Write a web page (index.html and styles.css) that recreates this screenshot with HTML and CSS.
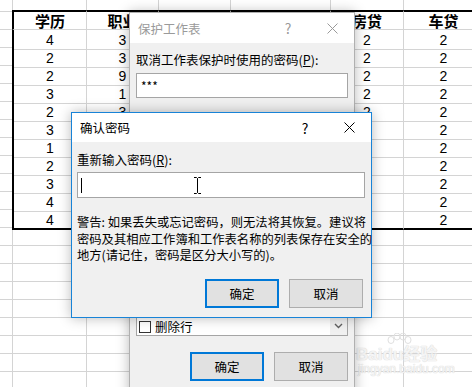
FILE: index.html
```html
<!DOCTYPE html>
<html lang="zh-CN">
<head>
  <meta charset="UTF-8">
  <title>确认密码</title>
  <link rel="stylesheet" href="styles.css">
</head>
<body>
  <div class="sheet">
    <div class="table">
      <div class="row head">
        <div class="cell">学历</div><div class="cell">职业</div><div class="cell"></div><div class="cell"></div><div class="cell">房贷</div><div class="cell">车贷</div>
      </div>
      <div class="row"><div class="cell">4</div><div class="cell">3</div><div class="cell"></div><div class="cell"></div><div class="cell">2</div><div class="cell">2</div></div>
      <div class="row"><div class="cell">2</div><div class="cell">3</div><div class="cell"></div><div class="cell"></div><div class="cell">2</div><div class="cell">2</div></div>
      <div class="row"><div class="cell">2</div><div class="cell">9</div><div class="cell"></div><div class="cell"></div><div class="cell">2</div><div class="cell">2</div></div>
      <div class="row"><div class="cell">3</div><div class="cell">1</div><div class="cell"></div><div class="cell"></div><div class="cell">2</div><div class="cell">2</div></div>
      <div class="row"><div class="cell">2</div><div class="cell">3</div><div class="cell"></div><div class="cell"></div><div class="cell">2</div><div class="cell">2</div></div>
      <div class="row"><div class="cell">3</div><div class="cell"></div><div class="cell"></div><div class="cell"></div><div class="cell"></div><div class="cell">2</div></div>
      <div class="row"><div class="cell">1</div><div class="cell"></div><div class="cell"></div><div class="cell"></div><div class="cell"></div><div class="cell">2</div></div>
      <div class="row"><div class="cell">2</div><div class="cell"></div><div class="cell"></div><div class="cell"></div><div class="cell"></div><div class="cell">2</div></div>
      <div class="row"><div class="cell">3</div><div class="cell"></div><div class="cell"></div><div class="cell"></div><div class="cell"></div><div class="cell">2</div></div>
      <div class="row"><div class="cell">4</div><div class="cell"></div><div class="cell"></div><div class="cell"></div><div class="cell"></div><div class="cell">2</div></div>
      <div class="row last"><div class="cell">4</div><div class="cell"></div><div class="cell"></div><div class="cell"></div><div class="cell"></div><div class="cell">2</div></div>
    </div>

    <div class="watermark">
      <svg class="paw" width="26" height="14" viewBox="0 0 26 14">
        <ellipse cx="5" cy="7" rx="3" ry="3.5"/>
        <ellipse cx="11" cy="3.5" rx="3" ry="3.5"/>
        <ellipse cx="17" cy="3.5" rx="3" ry="3.5"/>
        <ellipse cx="22" cy="7" rx="3" ry="3.5"/>
      </svg>
      <div class="wm-logo">Baidu经验</div>
      <div class="wm-url">jingyan.baidu.com</div>
    </div>

    <!-- back dialog: 保护工作表 (inactive) -->
    <div class="dialog protect inactive">
      <div class="titlebar">
        <span class="title">保护工作表</span>
        <span class="tb-btn">?</span>
        <span class="tb-btn">
          <svg width="11" height="11" viewBox="0 0 11 11"><path d="M0.5 0.5L10.5 10.5M10.5 0.5L0.5 10.5" stroke="currentColor" stroke-width="1"/></svg>
        </span>
      </div>
      <div class="body">
        <div class="label">取消工作表保护时使用的密码(<u>P</u>):</div>
        <div class="input">***</div>
        <div class="listbox">
          <div class="items">
            <div class="item"><span class="check"></span>删除行</div>
          </div>
          <div class="scrollbar">
            <svg width="9" height="6" viewBox="0 0 9 6"><path d="M1 1L4.5 4.5L8 1" fill="none" stroke="#606060" stroke-width="1.4"/></svg>
          </div>
        </div>
        <div class="buttons">
          <span class="button default">确定</span>
          <span class="button">取消</span>
        </div>
      </div>
    </div>

    <!-- front dialog: 确认密码 -->
    <div class="dialog confirm">
      <div class="titlebar">
        <span class="title">确认密码</span>
        <span class="tb-btn">?</span>
        <span class="tb-btn">
          <svg width="11" height="11" viewBox="0 0 11 11"><path d="M0.5 0.5L10.5 10.5M10.5 0.5L0.5 10.5" stroke="currentColor" stroke-width="1"/></svg>
        </span>
      </div>
      <div class="body">
        <div class="label">重新输入密码(<u>R</u>):</div>
        <div class="input">
          <span class="caret"></span>
          <svg class="ibeam" width="7" height="17" viewBox="0 0 7 17"><path d="M0 0.5H2.5L3.5 1.5L4.5 0.5H7M3.5 1.5V15.5M0 16.5H2.5L3.5 15.5L4.5 16.5H7" fill="none" stroke="#000" stroke-width="1"/></svg>
        </div>
        <p class="warning">警告: 如果丢失或忘记密码，则无法将其恢复。建议将<br>密码及其相应工作簿和工作表名称的列表保存在安全的<br>地方(请记住，密码是区分大小写的)。</p>
        <div class="buttons">
          <span class="button default">确定</span>
          <span class="button">取消</span>
        </div>
      </div>
    </div>
  </div>
</body>
</html>
```

FILE: styles.css
```css
:root {
  --grid: #d4d4d4;
  --face: #f0f0f0;
  --accent: #0078d7;
  --btn: #e1e1e1;
  --btn-border: #adadad;
}

body {
  margin: 0;
  background: #fff;
  font-family: "Noto Sans CJK SC", "Noto Sans", sans-serif;
}

/* worksheet with gridlines */
.sheet {
  position: relative;
  width: 472px;
  height: 387px;
  overflow: hidden;
  padding-top: 10px;
  box-sizing: border-box;
  background:
    linear-gradient(var(--grid), var(--grid)) 12px 0 / 1px 100% no-repeat,
    linear-gradient(var(--grid), var(--grid)) 86px 0 / 1px 100% no-repeat,
    linear-gradient(var(--grid), var(--grid)) 158px 0 / 1px 100% no-repeat,
    linear-gradient(var(--grid), var(--grid)) 230px 0 / 1px 100% no-repeat,
    linear-gradient(var(--grid), var(--grid)) 330px 0 / 1px 100% no-repeat,
    linear-gradient(var(--grid), var(--grid)) 403px 0 / 1px 100% no-repeat,
    repeating-linear-gradient(to bottom, transparent 0 11px, var(--grid) 11px 12px, transparent 12px 18px);
}

.table {
  margin-left: 12px;
  width: 472px;
  background: #fff;
}

.row {
  display: grid;
  grid-template-columns: 75px 72px 72px 100px 73px 80px;
  height: 18px;
}

.cell {
  box-sizing: border-box;
  border-right: 1px solid var(--grid);
  border-bottom: 1px solid var(--grid);
  text-align: center;
  font-family: "Liberation Sans", Arial, sans-serif;
  font-size: 14px;
  line-height: 17px;
  padding-top: 2px;
  color: #000;
}

.cell:first-child {
  border-left: 2px solid #000;
}

.row.head {
  height: 20px;
}

.row.head .cell {
  border-top: 2px solid #000;
  font-family: "Noto Sans CJK SC", sans-serif;
  font-weight: 700;
  font-size: 15px;
  line-height: 17px;
  padding-top: 0;
}

.row.last .cell {
  border-bottom: 2px solid #000;
  line-height: 16px;
}

/* watermark */
.watermark {
  position: absolute;
  left: 356px;
  top: 333px;
  color: rgba(255, 255, 255, 0.75);
  text-shadow: 0 0 1px #d6d6d6, 0 0 1px #d6d6d6;
}

.paw {
  display: block;
  margin-left: 30px;
  fill: none;
  stroke: #e0e0e0;
}

.wm-logo {
  font-family: "Liberation Sans", "Noto Sans CJK SC", sans-serif;
  font-weight: 700;
  font-size: 17px;
  line-height: 16px;
}

.wm-url {
  font-family: "Liberation Sans", sans-serif;
  font-size: 12px;
  line-height: 13px;
  margin-left: 2px;
}

/* dialogs */
.dialog {
  position: absolute;
  box-sizing: border-box;
  background: var(--face);
  font-size: 12.5px;
  color: #000;
  box-shadow: 0 0 12px rgba(0, 0, 0, 0.28);
}

.titlebar {
  display: flex;
  align-items: center;
  background: #fff;
}

.title {
  flex: 1;
  padding-left: 8px;
}

.tb-btn {
  width: 44px;
  display: flex;
  justify-content: center;
  align-items: center;
  font-size: 14px;
}

.label {
  line-height: 16px;
  white-space: nowrap;
}

.input {
  position: relative;
  box-sizing: border-box;
  background: #fff;
  border: 1px solid #a5a5a5;
  display: flex;
  align-items: center;
  padding-left: 3px;
}

.buttons {
  display: flex;
  justify-content: flex-end;
  gap: 10px;
}

.button {
  box-sizing: border-box;
  width: 74px;
  height: 29px;
  display: flex;
  justify-content: center;
  align-items: center;
  background: var(--btn);
  border: 1px solid var(--btn-border);
}

.button.default {
  border: 2px solid var(--accent);
}

/* 保护工作表 */
.protect {
  left: 129px;
  top: 12px;
  width: 226px;
  height: 400px;
  border: 1px solid #b0b0b0;
}

.protect .titlebar {
  height: 30px;
}

.inactive .title,
.inactive .tb-btn {
  color: #9a9a9a;
}

.protect .body {
  padding: 9px 6px 0 6px;
}

.protect .input {
  margin-top: 5px;
  height: 25px;
  font-size: 12px;
  padding-left: 4px;
}

.listbox {
  margin-top: 46px;
  height: 192px;
  box-sizing: border-box;
  border: 1px solid #a5a5a5;
  background: #fff;
  display: flex;
}

.items {
  flex: 1;
  display: flex;
  flex-direction: column;
  justify-content: flex-end;
  overflow: hidden;
}

.item {
  display: flex;
  align-items: center;
  gap: 4px;
  height: 17px;
  padding-left: 2px;
  flex-shrink: 0;
}

.check {
  width: 12px;
  height: 12px;
  box-sizing: border-box;
  border: 1px solid #333;
  background: #fff;
}

.scrollbar {
  width: 17px;
  background: var(--face);
  display: flex;
  align-items: flex-end;
  justify-content: center;
  padding-bottom: 6px;
  box-sizing: border-box;
}

.protect .buttons {
  margin-top: 16px;
}

/* 确认密码 */
.confirm {
  left: 71px;
  top: 112px;
  width: 301px;
  height: 206px;
  border: 1px solid #1883d7;
}

.confirm .titlebar {
  height: 29px;
}

.confirm .body {
  padding: 10px 6px 0 5px;
}

.confirm .input {
  margin-top: 4px;
  height: 26px;
}

.caret {
  width: 1px;
  height: 15px;
  background: #000;
}

.ibeam {
  position: absolute;
  left: 116px;
  top: 4px;
}

.warning {
  margin: 16px 0 0;
  font-size: 12.3px;
  line-height: 16.5px;
  white-space: nowrap;
}

.confirm .buttons {
  margin-top: 15px;
  padding-right: 2px;
}
```
